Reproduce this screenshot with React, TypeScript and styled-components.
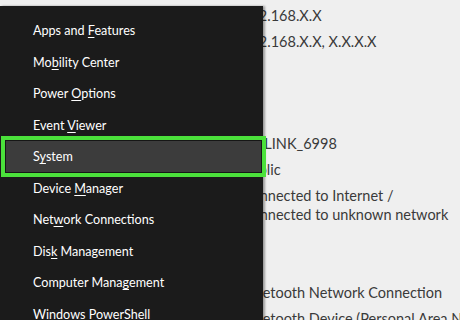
import styled, { createGlobalStyle } from "styled-components";

const GlobalStyle = createGlobalStyle`
    html, body {
        margin: 0;
        padding: 0;
        background: #efefef;
    }
`;

const Screen = styled.div`
    position: relative;
    width: 460px;
    height: 320px;
    overflow: hidden;
    background: #efefef;
    font-family: Lato, "Open Sans", sans-serif;
`;

const Details = styled.div`
    display: flex;
    flex-direction: column;
    padding-left: 242px;
    color: #3a3a3a;
    font-size: 14.5px;
`;

const Group = styled.div<{ $top: number }>`
    display: flex;
    flex-direction: column;
    margin-top: ${(p) => p.$top}px;
`;

const Value = styled.div`
    padding: 3.5px 0;
    line-height: 19px;
    white-space: nowrap;
`;

const Menu = styled.ul`
    position: absolute;
    left: 0;
    top: 6px;
    width: 263px;
    height: 330px;
    margin: 0;
    padding: 9px 0 0;
    list-style: none;
    background: #1b1b1b;
    box-shadow: 2px 0 2px rgba(0, 0, 0, 0.35);
    display: flex;
    flex-direction: column;
`;

const Item = styled.li<{ $selected?: boolean }>`
    position: relative;
    height: 31.5px;
    display: flex;
    align-items: center;
    padding-left: 33px;
    color: #ffffff;
    font-size: 12.6px;
    white-space: nowrap;

    ${(p) =>
        p.$selected &&
        `
        &::after {
            content: "";
            position: absolute;
            left: 1px;
            right: -3px;
            top: -5px;
            bottom: -4px;
            border: 4px solid #4be13b;
            background: #3c3c3c;
            box-shadow: inset 0 0 0 1px #161616;
        }
    `}
`;

const Label = styled.span`
    position: relative;
    z-index: 1;

    u {
        text-decoration-thickness: 1px;
        text-underline-offset: 2px;
    }
`;

type Entry = { before: string; key: string; after: string; selected?: boolean };

const entries: Entry[] = [
    { before: "Apps and ", key: "F", after: "eatures" },
    { before: "Mo", key: "b", after: "ility Center" },
    { before: "Power ", key: "O", after: "ptions" },
    { before: "Event ", key: "V", after: "iewer" },
    { before: "S", key: "y", after: "stem", selected: true },
    { before: "Device ", key: "M", after: "anager" },
    { before: "Net", key: "w", after: "ork Connections" },
    { before: "Dis", key: "k", after: " Management" },
    { before: "Computer Mana", key: "g", after: "ement" },
    { before: "W", key: "i", after: "ndows PowerShell" },
];

export default function App() {
    return (
        <>
            <GlobalStyle />
            <Screen>
                <Details>
                    <Group $top={2}>
                        <Value>192.168.X.X</Value>
                        <Value>192.168.X.X, X.X.X.X</Value>
                    </Group>
                    <Group $top={76}>
                        <Value>TP-LINK_6998</Value>
                        <Value>Public</Value>
                        <Value>
                            Connected to Internet /
                            <br />
                            Connected to unknown network
                        </Value>
                    </Group>
                    <Group $top={52}>
                        <Value>Bluetooth Network Connection</Value>
                        <Value>Bluetooth Device (Personal Area Network)</Value>
                    </Group>
                </Details>
                <Menu>
                    {entries.map((e) => (
                        <Item key={e.before + e.key} $selected={e.selected}>
                            <Label>
                                {e.before}
                                <u>{e.key}</u>
                                {e.after}
                            </Label>
                        </Item>
                    ))}
                </Menu>
            </Screen>
        </>
    );
}
